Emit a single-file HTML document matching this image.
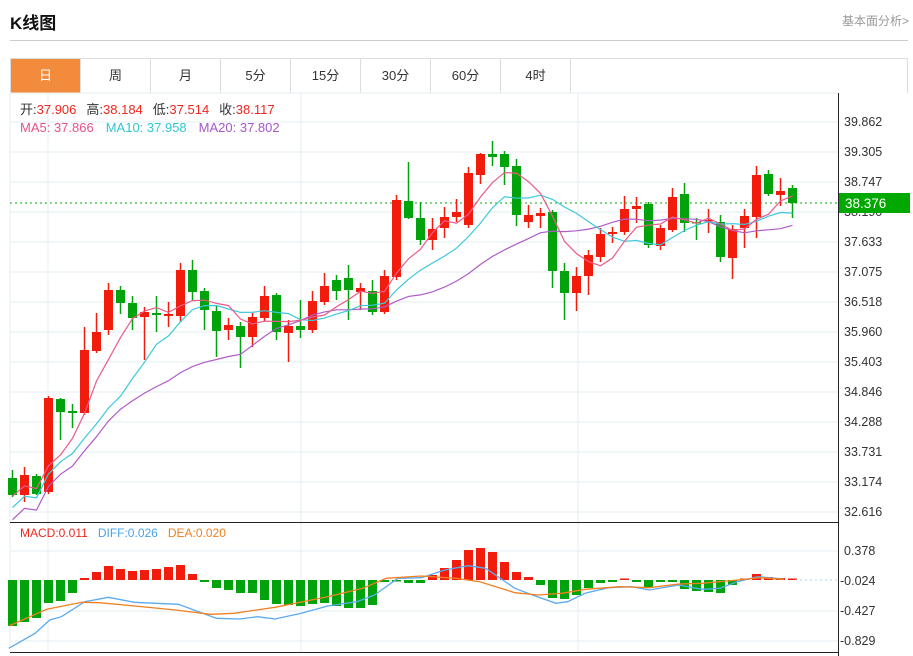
<!DOCTYPE html>
<html><head><meta charset="utf-8">
<style>
*{margin:0;padding:0;box-sizing:border-box}
body{width:913px;height:656px;background:#fff;font-family:"Liberation Sans","Noto Sans CJK SC",sans-serif;position:relative;overflow:hidden}
.title{position:absolute;left:10px;top:9px;font-size:17px;font-weight:bold;color:#111}
.more{position:absolute;left:842px;top:12px;font-size:12px;color:#999}
.hl{position:absolute;left:10px;top:40px;width:898px;height:1px;background:#ccc}
.tabs{position:absolute;left:10px;top:58px;width:898px;height:35px;border:1px solid #ddd;border-bottom:none;display:flex}
.tabs div{width:70px;height:34px;border-right:1px solid #ddd;text-align:center;line-height:34px;font-size:13px;color:#333}
.tabs div.on{background:#f28b3c;color:#fff}
svg{position:absolute;left:0;top:0}
</style></head><body>
<div class="title">K线图</div>
<div class="more">基本面分析&gt;</div>
<div class="hl"></div>
<div class="tabs"><div class="on">日</div><div>周</div><div>月</div><div>5分</div><div>15分</div><div>30分</div><div>60分</div><div>4时</div></div>
<svg id="s" width="913" height="656" xmlns="http://www.w3.org/2000/svg" font-family="Liberation Sans, Noto Sans CJK SC, sans-serif">
<g id="grid"></g>
<g id="cd"></g>
<g id="ma"></g>
<g font-size="12.5" fill="#333">
<text x="844" y="126">39.862</text><text x="844" y="156">39.305</text><text x="844" y="186">38.747</text><text x="844" y="216">38.190</text><text x="844" y="246">37.633</text><text x="844" y="276">37.075</text><text x="844" y="306">36.518</text><text x="844" y="336">35.960</text><text x="844" y="366">35.403</text><text x="844" y="396">34.846</text><text x="844" y="426">34.288</text><text x="844" y="456">33.731</text><text x="844" y="486">33.174</text><text x="844" y="516">32.616</text>
<text x="844" y="555">0.378</text><text x="840" y="585">-0.024</text><text x="840" y="615">-0.427</text><text x="840" y="645">-0.829</text>
</g>
<rect x="839" y="193" width="71" height="20" fill="#00a800"/>
<text x="845" y="208" font-size="13.5" fill="#fff">38.376</text>
<g font-size="13">
<text x="20" y="114"><tspan fill="#333">开:</tspan><tspan fill="#f0261d">37.906</tspan><tspan fill="#333" dx="10">高:</tspan><tspan fill="#f0261d">38.184</tspan><tspan fill="#333" dx="10">低:</tspan><tspan fill="#f0261d">37.514</tspan><tspan fill="#333" dx="10">收:</tspan><tspan fill="#f0261d">38.117</tspan></text>
<text x="20" y="132"><tspan fill="#e8508a">MA5: 37.866</tspan><tspan fill="#2ec5d5" dx="12">MA10: 37.958</tspan><tspan fill="#a855c8" dx="12">MA20: 37.802</tspan></text>
</g>
<text x="20" y="537" font-size="12"><tspan fill="#f0261d">MACD:0.011</tspan><tspan fill="#4aa3f0" dx="10">DIFF:0.026</tspan><tspan fill="#f08020" dx="10">DEA:0.020</tspan></text>
</svg>
<script>
var NS="http://www.w3.org/2000/svg";
function el(p,t,a){var e=document.createElementNS(NS,t);for(var k in a)e.setAttribute(k,a[k]);p.appendChild(e);return e;}
var g=document.getElementById('grid');
for(var y=122;y<=512;y+=30)el(g,'line',{x1:10,x2:838,y1:y,y2:y,stroke:'#e3edf3'});
[551,611,641].forEach(function(y){el(g,'line',{x1:10,x2:838,y1:y,y2:y,stroke:'#e3edf3'})});
[48,301,578].forEach(function(x){el(g,'line',{x1:x,x2:x,y1:93,y2:652,stroke:'#e3edf3'})});
el(g,'line',{x1:10,x2:10,y1:93,y2:652,stroke:'#e3edf3'});
el(g,'line',{x1:10,x2:838,y1:93,y2:93,stroke:'#e3edf3'});
el(g,'line',{x1:838.5,x2:838.5,y1:93,y2:656,stroke:'#222'});
el(g,'line',{x1:10,x2:838,y1:522.5,y2:522.5,stroke:'#222'});
el(g,'line',{x1:10,x2:838,y1:652.5,y2:652.5,stroke:'#222'});
el(g,'line',{x1:10,x2:838,y1:203,y2:203,stroke:'#5cc85c','stroke-dasharray':'2,3','stroke-width':1.5});
var C=[[478,495,470,497,0],[475,495,467,502,1],[476,494,474,495,0],[398,492,396,494,1],[399,412,398,440,0],[411,413,404,428,0],[350,413,327,415,1],[332,351,313,353,1],[290,330,283,335,1],[290,303,286,314,0],[303,318,296,330,0],[312,317,307,360,1],[313,315,296,332,0],[314,316,302,327,1],[270,316,263,322,1],[270,292,260,300,0],[291,310,288,330,0],[311,331,306,357,0],[325,330,318,340,1],[326,337,322,368,0],[317,337,313,347,1],[296,318,286,321,1],[295,332,293,340,0],[326,333,320,362,1],[326,330,300,338,0],[301,330,291,333,1],[286,302,273,305,1],[280,291,275,300,0],[278,290,265,320,0],[288,292,283,310,1],[291,312,280,315,0],[276,312,270,314,1],[200,277,195,280,1],[201,218,162,219,0],[218,240,202,245,0],[229,240,218,250,1],[217,228,207,238,1],[212,217,199,222,1],[173,225,167,228,1],[154,175,153,184,1],[154,157,141,166,0],[154,167,151,185,0],[166,215,159,226,0],[215,222,205,228,1],[213,216,208,228,1],[212,271,210,288,0],[271,293,263,320,0],[276,293,267,311,1],[255,276,250,295,1],[234,257,228,262,1],[232,234,227,243,1],[209,232,196,235,1],[206,209,197,223,1],[204,245,202,248,0],[228,246,225,250,1],[197,230,188,232,1],[194,223,183,232,0],[222,223,218,240,0],[220,221,209,233,1],[222,257,215,262,0],[229,258,225,279,1],[216,228,209,248,1],[175,217,166,238,1],[174,194,170,196,0],[191,195,178,206,1],[188,203,185,218,0]];
var cg=document.getElementById('cd');
var closes=[];
C.forEach(function(c,i){var x=12.5+12*i;var col=c[4]?'#f21c0c':'#00a30c';
el(cg,'line',{x1:x,x2:x,y1:c[2],y2:c[3],stroke:col,'stroke-width':1.5});
el(cg,'rect',{x:x-4.5,y:c[0],width:9,height:Math.max(1.5,c[1]-c[0]),fill:col});
closes.push(c[4]?c[0]:c[1]);});
var mg=document.getElementById('ma');
function ma(n,col,k0){var pts=[];for(var i=0;i<closes.length;i++){var s=0,k=0;for(var j=Math.max(0,i-n+1);j<=i;j++){s+=closes[j];k++;}
var v=s/k; if(i<n-1){v=v+(n-1-i)*k0;} pts.push((12.5+12*i)+','+v.toFixed(1));}
el(mg,'polyline',{points:pts.join(' '),fill:'none',stroke:col,'stroke-width':1.2});}
ma(20,'#b05cc8',1.3);ma(10,'#3cc8dc',1.4);ma(5,'#ec5a8c',0.3);
var M=[46,42,38,23,21,13,-2,-8,-14,-11,-9,-10,-11,-13,-15,-6,2,8,10,13,13,20,24,25,26,24,23,26,28,28,25,2,1,3,3,-5,-12,-20,-30,-32,-28,-18,-8,-3,5,18,19,15,8,3,2,-1,2,7,2,2,9,11,12,13,5,-1,-6,-3,-2,-1];
M.forEach(function(v,i){var x=12.5+12*i;var col=v<0?'#f21c0c':'#00a30c';var h=Math.max(1.5,Math.abs(v));
el(mg,'rect',{x:x-4.5,y:v<0?580-h:580,width:9,height:h,fill:col});});
el(mg,'line',{x1:795,x2:838,y1:580,y2:580,stroke:'#9fd8ef','stroke-dasharray':'2,3'});
function ln(arr,col){var p=arr.map(function(a){return (a[0]/1.709).toFixed(1)+','+(a[1]/3+500).toFixed(1)}).join(' ');
el(mg,'polyline',{points:p,fill:'none',stroke:col,'stroke-width':1.3});}
ln([[15,445],[60,400],[85,360],[105,350],[145,305],[185,292],[230,307],[305,313],[370,355],[410,357],[440,350],[470,357],[515,340],[560,318],[610,305],[640,285],[680,235],[720,233],[760,210],[800,197],[830,205],[880,265],[910,285],[950,310],[970,305],[1000,280],[1040,263],[1080,260],[1110,270],[1160,255],[1200,268],[1230,265],[1260,245],[1295,230],[1340,237]],'#5aaaf0');
ln([[15,378],[80,328],[140,307],[170,308],[230,318],[300,330],[360,343],[400,340],[470,322],[560,290],[620,265],[660,235],[720,228],[780,235],[820,245],[880,278],[920,285],[960,280],[1000,268],[1060,260],[1110,263],[1160,252],[1200,250],[1260,240],[1300,233],[1340,238]],'#f08020');
</script>
</body></html>
